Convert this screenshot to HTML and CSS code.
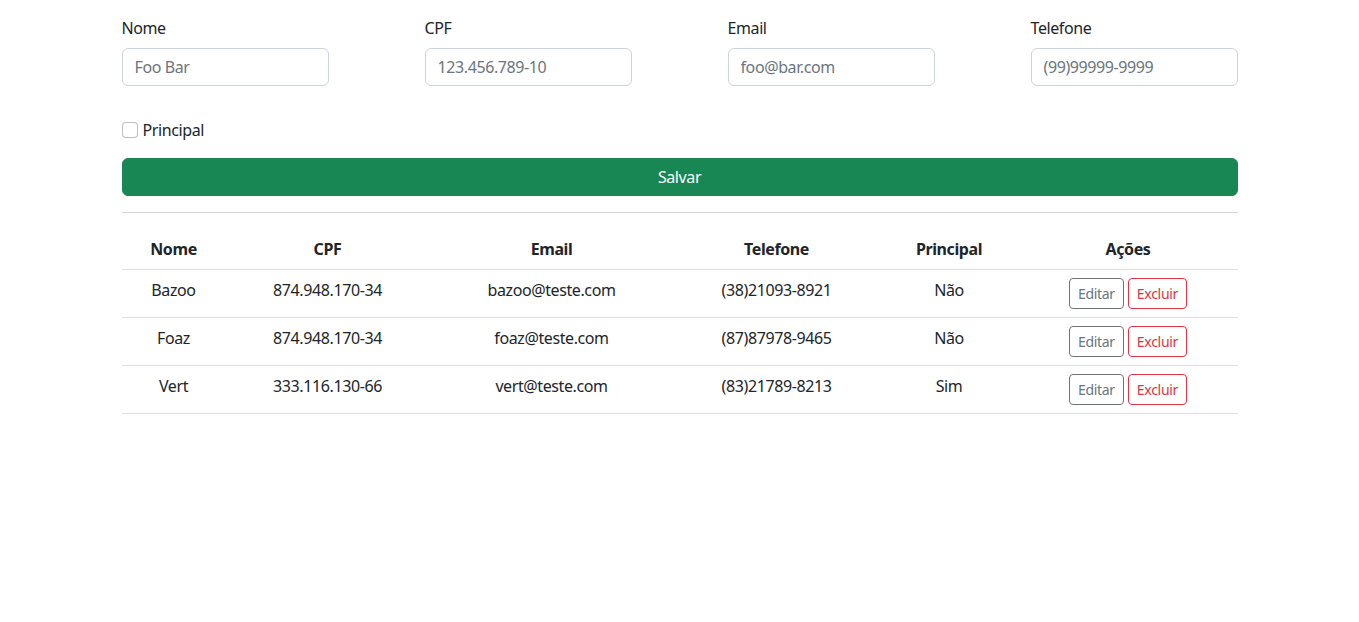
FILE: index.html
```html
<!DOCTYPE html>
<html lang="pt-BR">
<head>
<meta charset="utf-8">
<title>Cadastro</title>
<link rel="stylesheet" href="styles.css">
</head>
<body>
<div class="container">
  <form class="form">
    <div class="fields">
      <div class="field">
        <label class="label" for="nome">Nome</label>
        <input class="input" id="nome" type="text" placeholder="Foo Bar">
      </div>
      <div class="field">
        <label class="label" for="cpf">CPF</label>
        <input class="input" id="cpf" type="text" placeholder="123.456.789-10">
      </div>
      <div class="field">
        <label class="label" for="email">Email</label>
        <input class="input" id="email" type="text" placeholder="foo@bar.com">
      </div>
      <div class="field">
        <label class="label" for="tel">Telefone</label>
        <input class="input" id="tel" type="text" placeholder="(99)99999-9999">
      </div>
    </div>
    <div class="check">
      <input class="check-input" id="principal" type="checkbox">
      <label class="check-label" for="principal">Principal</label>
    </div>
    <button class="btn-save" type="button">Salvar</button>
  </form>
  <hr class="divider">
  <table class="table">
    <colgroup>
      <col class="c-nome"><col class="c-cpf"><col class="c-email"><col class="c-tel"><col class="c-princ"><col class="c-acoes">
    </colgroup>
    <thead>
      <tr><th>Nome</th><th>CPF</th><th>Email</th><th>Telefone</th><th>Principal</th><th>Ações</th></tr>
    </thead>
    <tbody>
      <tr><td>Bazoo</td><td>874.948.170-34</td><td>bazoo@teste.com</td><td>(38)21093-8921</td><td>Não</td>
        <td><div class="actions"><button class="btn-sm btn-edit" type="button">Editar</button><button class="btn-sm btn-del" type="button">Excluir</button></div></td></tr>
      <tr><td>Foaz</td><td>874.948.170-34</td><td>foaz@teste.com</td><td>(87)87978-9465</td><td>Não</td>
        <td><div class="actions"><button class="btn-sm btn-edit" type="button">Editar</button><button class="btn-sm btn-del" type="button">Excluir</button></div></td></tr>
      <tr><td>Vert</td><td>333.116.130-66</td><td>vert@teste.com</td><td>(83)21789-8213</td><td>Sim</td>
        <td><div class="actions"><button class="btn-sm btn-edit" type="button">Editar</button><button class="btn-sm btn-del" type="button">Excluir</button></div></td></tr>
    </tbody>
  </table>
</div>
</body>
</html>
```
FILE: styles.css
```css
* { box-sizing: border-box; }
html, body { margin: 0; padding: 0; background: #fff; }
body {
  font-family: "Segoe UI", "Noto Sans", "Open Sans", sans-serif;
  font-size: 16px;
  line-height: 24px;
  letter-spacing: -0.4px;
  color: #212529;
}
.container {
  width: 1140px;
  margin: 0 auto;
  padding: 16px 12px 0;
}
.fields {
  display: flex;
  justify-content: space-between;
}
.field { width: 207px; display: flex; flex-direction: column; }
.label { display: block; margin-bottom: 8px; }
.input {
  height: 38px;
  padding: 6px 12px;
  font: inherit;
  letter-spacing: inherit;
  color: #212529;
  border: 1px solid #ced4da;
  border-radius: 6px;
  background: #fff;
  outline: none;
}
.input::placeholder { color: #6c757d; opacity: 1; }
.check {
  display: flex;
  align-items: center;
  gap: 5px;
  margin-top: 32px;
  height: 24px;
}
.check-input {
  appearance: none;
  -webkit-appearance: none;
  width: 16px;
  height: 16px;
  margin: 0;
  border: 1px solid rgba(0,0,0,.25);
  border-radius: 4px;
  background: #fff;
}
.btn-save {
  display: block;
  width: 100%;
  height: 38px;
  margin-top: 16px;
  border: 1px solid #198754;
  border-radius: 6px;
  background: #198754;
  color: #fff;
  font: inherit;
  letter-spacing: inherit;
  cursor: pointer;
}
.divider {
  margin: 16px 0;
  border: 0;
  border-top: 1px solid #d3d3d4;
  height: 0;
}
.table {
  width: 100%;
  border-collapse: collapse;
  table-layout: fixed;
  vertical-align: top;
}
.c-nome { width: 104px; }
.c-cpf { width: 204px; }
.c-email { width: 244px; }
.c-tel { width: 206px; }
.c-princ { width: 139px; }
.c-acoes { width: 219px; }
.table th, .table td {
  padding: 8px;
  text-align: center;
  border-bottom: 1px solid #dee2e6;
  vertical-align: top;
}
.table th { font-weight: 700; }
.actions { display: flex; justify-content: center; gap: 4px; }
.btn-sm {
  height: 31px;
  padding: 4px 8px;
  font: inherit;
  font-size: 14px;
  line-height: 21px;
  letter-spacing: -0.3px;
  border-radius: 4px;
  background: #fff;
  cursor: pointer;
}
.btn-edit { color: #6c757d; border: 1px solid #6c757d; }
.btn-del { color: #dc3545; border: 1px solid #dc3545; }
```
